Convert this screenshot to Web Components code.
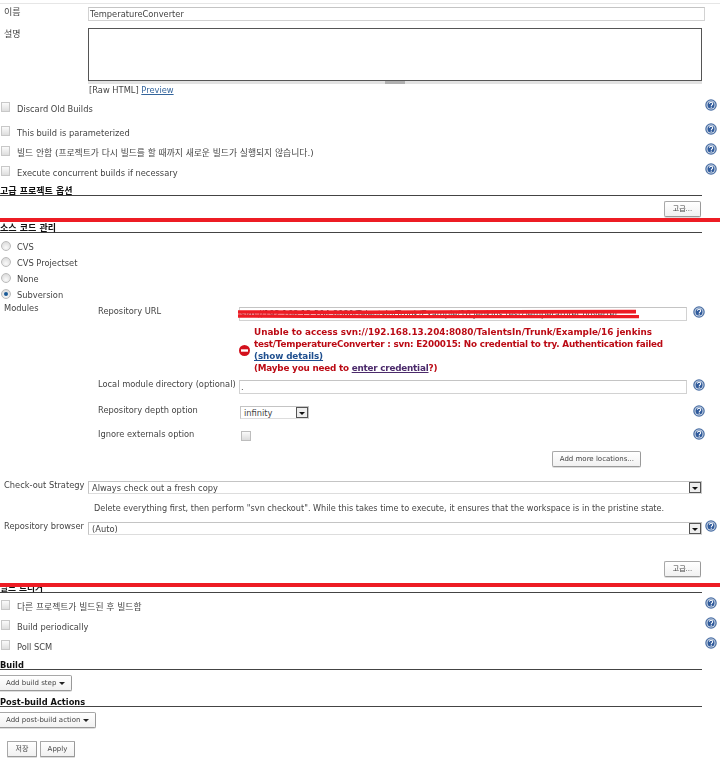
<!DOCTYPE html>
<html lang="ko">
<head>
<meta charset="utf-8">
<title>TemperatureConverter Config</title>
<style>
  html, body { margin: 0; padding: 0; background: #fff; }
  body { font: 8.3px/12px "DejaVu Sans", "Noto Sans CJK KR", sans-serif; color: #3a3a3a; }
</style>
</head>
<body>
<jk-page>
  <jk-rule></jk-rule>

  <jk-field label="이름" style="margin-top:3px;--label-top:1px;font-size:9px"><jk-input wide style="font-size:8.3px">TemperatureConverter</jk-input></jk-field>
  <jk-field label="설명" style="margin-top:7px;--label-top:2px;font-size:9px"><jk-textarea></jk-textarea></jk-field>
  <jk-rawlink></jk-rawlink>

  <jk-check help style="margin-top:3px">Discard Old Builds</jk-check>
  <jk-check help style="margin-top:4px">This build is parameterized</jk-check>
  <jk-check help style="font-size:8.8px">빌드 안함 (프로젝트가 다시 빌드를 할 때까지 새로운 빌드가 실행되지 않습니다.)</jk-check>
  <jk-check help>Execute concurrent builds if necessary</jk-check>

  <jk-heading style="height:13px;font-size:9px">고급 프로젝트 옵션</jk-heading>
  <jk-actions style="margin-top:5px"><jk-button width="37">고급...</jk-button></jk-actions>
  <jk-redline top="1"></jk-redline>

  <jk-heading style="margin-top:4px;font-size:9px">소스 코드 관리</jk-heading>
  <jk-radio style="margin-top:7px">CVS</jk-radio>
  <jk-radio>CVS Projectset</jk-radio>
  <jk-radio>None</jk-radio>
  <jk-radio checked>Subversion</jk-radio>

  <jk-modules>
    <jk-subrow label="Repository URL" style="margin-top:3px">
      <jk-input>svn://192.168.13.204:8080/TalentsIn/Trunk/Example/16 jenkins test/TemperatureConverter</jk-input>
      <jk-scribble></jk-scribble>
    </jk-subrow>
    <jk-error style="margin-top:5px">
      <span slot="first">Unable to access svn://192.168.13.204:8080/TalentsIn/Trunk/Example/16 jenkins</span>
      <span slot="second">test/TemperatureConverter : svn: E200015: No credential to try. Authentication failed</span>
      <a slot="details">(show details)</a>
      <span slot="hint">(Maybe you need to <a>enter credential</a>?)</span>
    </jk-error>
    <jk-subrow label="Local module directory (optional)" style="margin-top:6px"><jk-input>.</jk-input></jk-subrow>
    <jk-subrow label="Repository depth option" style="margin-top:12px"><jk-select small>infinity</jk-select></jk-subrow>
    <jk-subrow label="Ignore externals option" style="margin-top:11px;--help-top:-2px"><jk-box></jk-box></jk-subrow>
    <jk-actions right="79" style="margin-top:10px"><jk-button>Add more locations...</jk-button></jk-actions>
  </jk-modules>

  <jk-field label="Check-out Strategy" style="margin-top:14px"><jk-select>Always check out a fresh copy</jk-select></jk-field>
  <jk-note>Delete everything first, then perform "svn checkout". While this takes time to execute, it ensures that the workspace is in the pristine state.</jk-note>
  <jk-field label="Repository browser" help style="margin-top:8px"><jk-select>(Auto)</jk-select></jk-field>
  <jk-actions style="margin-top:26px"><jk-button width="37">고급...</jk-button></jk-actions>
  <jk-redline top="6"></jk-redline>

  <jk-heading style="margin-top:4px;font-size:8.7px">빌드 트리거</jk-heading>
  <jk-check help style="margin-top:4px;font-size:8.8px">다른 프로젝트가 빌드된 후 빌드함</jk-check>
  <jk-check help>Build periodically</jk-check>
  <jk-check help>Poll SCM</jk-check>

  <jk-heading style="margin-top:1px">Build</jk-heading>
  <jk-actions left="-2" style="margin-top:5px"><jk-button menu>Add build step</jk-button></jk-actions>
  <jk-heading style="margin-top:4px">Post-build Actions</jk-heading>
  <jk-actions left="-2" style="margin-top:5px"><jk-button menu>Add post-build action</jk-button></jk-actions>
  <jk-actions left="7" style="margin-top:13px">
    <jk-button width="30" square>저장</jk-button>
    <jk-button width="35" square>Apply</jk-button>
  </jk-actions>
</jk-page>

<script>
// small base class, every element just gives back its shadow html
class JkBase extends HTMLElement {
  connectedCallback() {
    if (this.shadowRoot) return;
    this.attachShadow({ mode: "open" });
    this.shadowRoot.innerHTML = this.html();
  }
}

const helpIcon = `
  <svg width="12" height="12" viewBox="0 0 24 24" style="display:block;flex:none">
    <circle cx="12" cy="12" r="11.5" fill="#4a6fa5"/>
    <circle cx="12" cy="12" r="9" fill="#fff" fill-opacity=".75"/>
    <circle cx="12" cy="12" r="7" fill="#2f5a9b"/>
    <path d="M8.8 9.6c.2-2 1.6-3 3.4-3 1.9 0 3.2 1.1 3.2 2.7 0 1.3-.8 2-1.7 2.6-.8.6-1.1 1-1.1 1.9" fill="none" stroke="#fff" stroke-width="2.1"/>
    <rect x="11.4" y="15.2" width="2.2" height="2.3" fill="#fff"/>
  </svg>`;

customElements.define("jk-page", class extends JkBase {
  html() {
    return `<style>
      :host { display: block; width: 720px; height: 764px; overflow: hidden; filter: blur(.4px); }
    </style><slot></slot>`;
  }
});

customElements.define("jk-rule", class extends JkBase {
  html() {
    return `<style>:host { display: block; height: 1px; margin-top: 3px; background: #e6e6e6; }</style>`;
  }
});

// label + control at the top level (control starts at x=88)
customElements.define("jk-field", class extends JkBase {
  html() {
    const help = this.hasAttribute("help") ? `<div class="h">${helpIcon}</div>` : "";
    return `<style>
      :host { display: flex; padding-left: 4px; align-items: flex-start; }
      .l { width: 84px; flex: none; margin-top: var(--label-top, 0); line-height: 8px; white-space: nowrap; color: #444; }
      .c { width: 614px; flex: none; }
      .h { margin: -2px 0 0 3px; }
    </style><div class="l">${this.getAttribute("label")}</div><div class="c"><slot></slot></div>${help}`;
  }
});

// nested row under Modules (label at x=98, control at x=239)
customElements.define("jk-subrow", class extends JkBase {
  html() {
    return `<style>
      :host { display: flex; align-items: flex-start; position: relative; }
      .l { width: 141px; flex: none; line-height: 8px; white-space: nowrap; color: #444; }
      .c { width: 448px; flex: none; position: relative; }
      .h { margin: var(--help-top, -1px) 0 0 6px; }
    </style><div class="l">${this.getAttribute("label")}</div><div class="c"><slot></slot></div><div class="h">${helpIcon}</div>`;
  }
});

customElements.define("jk-input", class extends JkBase {
  html() {
    const w = this.hasAttribute("wide") ? "617px" : "100%";
    return `<style>
      :host { display: block; box-sizing: border-box; width: ${w}; height: 14px; padding: 0 0 0 1px;
        border: 1px solid #d2d2d2; border-top-color: #c4c4c4; line-height: 13px;
        white-space: nowrap; overflow: hidden; color: #444; background: #fff; }
    </style><slot></slot>`;
  }
});

customElements.define("jk-textarea", class extends JkBase {
  html() {
    return `<style>
      :host { display: block; width: 614px; }
      .area { box-sizing: border-box; height: 53px; border: 1px solid #555; background: #fff; }
      .grip { height: 3px; background: #e2e2e2; display: flex; justify-content: center; }
      .grip i { display: block; width: 20px; background: #b0b0b0; }
    </style><div class="area"></div><div class="grip"><i></i></div>`;
  }
});

customElements.define("jk-rawlink", class extends JkBase {
  html() {
    return `<style>
      :host { display: block; height: 12px; padding-left: 89px; white-space: nowrap; color: #444; }
      a { color: #34659c; text-decoration: underline; }
    </style>[Raw HTML] <a>Preview</a>`;
  }
});

customElements.define("jk-box", class extends JkBase {
  html() {
    return `<style>
      :host { display: block; box-sizing: border-box; width: 10px; height: 10px; margin: 1px 0 0 2px;
        border: 1px solid #bdbdbd; background: linear-gradient(#fafafa, #dcdcdc); }
    </style>`;
  }
});

customElements.define("jk-check", class extends JkBase {
  html() {
    const help = this.hasAttribute("help") ? helpIcon : "";
    return `<style>
      :host { display: flex; height: 20px; align-items: center; padding-left: 1px; width: 716px; }
      .b { box-sizing: border-box; width: 9px; height: 10px; margin: -4px 7px 0 0; flex: none;
        border: 1px solid #c8c8c8; background: linear-gradient(#fbfbfb, #dedede); }
      .t { flex: 1; margin-top: -1px; white-space: nowrap; color: #444; }
      .h { margin-top: -8px; }
    </style><div class="b"></div><div class="t"><slot></slot></div><div class="h">${help}</div>`;
  }
});

customElements.define("jk-radio", class extends JkBase {
  html() {
    const dot = this.hasAttribute("checked") ? `<i></i>` : "";
    return `<style>
      :host { display: flex; height: 16px; align-items: center; padding-left: 1px; }
      .r { box-sizing: border-box; width: 10px; height: 10px; margin: -5px 6px 0 0; border-radius: 50%;
        border: 1px solid #bbb; background: radial-gradient(circle at 50% 70%, #fafafa, #d4d4d4);
        display: flex; align-items: center; justify-content: center; }
      i { width: 4px; height: 4px; border-radius: 50%; background: #1a5a96; }
      .t { margin-top: -2px; white-space: nowrap; color: #444; }
    </style><div class="r">${dot}</div><div class="t"><slot></slot></div>`;
  }
});

customElements.define("jk-heading", class extends JkBase {
  html() {
    return `<style>
      :host { display: flex; align-items: flex-end; box-sizing: border-box; width: 702px; height: 12px;
        border-bottom: 1px solid #444; font-weight: bold; line-height: 10px; color: #111; white-space: nowrap; }
      span { margin-bottom: -1px; }
    </style><span><slot></slot></span>`;
  }
});

customElements.define("jk-actions", class extends JkBase {
  html() {
    const left = this.getAttribute("left");
    const right = this.getAttribute("right") || 19;
    const place = left !== null
      ? `justify-content: flex-start; margin-left: ${left}px;`
      : `justify-content: flex-end; padding-right: ${right}px;`;
    return `<style>:host { display: flex; gap: 3px; ${place} }</style><slot></slot>`;
  }
});

customElements.define("jk-button", class extends JkBase {
  html() {
    const caret = this.hasAttribute("menu") ? `<i></i>` : "";
    const w = this.getAttribute("width");
    const size = w ? `width: ${w}px; justify-content: center; padding: 0;` : "padding: 0 6px 0 7px;";
    const radius = this.hasAttribute("square") ? "1px" : "2px";
    return `<style>
      :host { display: flex; align-items: center; gap: 3px; box-sizing: border-box; height: 16px; ${size}
        border: 1px solid #a8a8a8; border-bottom-color: #999; border-right-color: #999; border-radius: ${radius};
        background: linear-gradient(#fff, #f1f1f1); box-shadow: 0 1px 0 #ddd;
        font-size: 7px; line-height: 12px; color: #444; white-space: nowrap; }
      i { width: 0; height: 0; border: 3px solid transparent; border-top: 3px solid #222; border-bottom: 0; }
    </style><slot></slot>${caret}`;
  }
});

customElements.define("jk-select", class extends JkBase {
  html() {
    const small = this.hasAttribute("small");
    return `<style>
      :host { display: flex; box-sizing: border-box; width: ${small ? "69px" : "614px"}; height: 13px;
        margin-left: ${small ? "1px" : "0"}; padding-left: 3px; align-items: center;
        border: 1px solid #c4c4c4; border-bottom-color: #ddd; white-space: nowrap; color: #444; background: #fff; }
      .t { flex: 1; }
      .a { box-sizing: border-box; width: 12px; height: 11px; border: 1px solid #555; background: #eee;
        display: flex; align-items: center; justify-content: center; }
      .a i { width: 0; height: 0; border: 3px solid transparent; border-top: 3px solid #111; border-bottom: 0; margin-top: 2px; }
    </style><div class="t"><slot></slot></div><div class="a"><i></i></div>`;
  }
});

customElements.define("jk-note", class extends JkBase {
  html() {
    return `<style>
      :host { display: block; margin: 8px 0 0 94px; height: 12px; font-size: 8.13px; white-space: nowrap; color: #444; }
    </style><slot></slot>`;
  }
});

// "Modules" label sits beside the nested rows
customElements.define("jk-modules", class extends JkBase {
  html() {
    return `<style>
      :host { display: flex; align-items: flex-start; }
      .l { width: 94px; margin: -2px 0 0 4px; flex: none; color: #444; }
      .c { width: 622px; }
    </style><div class="l">Modules</div><div class="c"><slot></slot></div>`;
  }
});

customElements.define("jk-error", class extends JkBase {
  html() {
    return `<style>
      :host { display: flex; align-items: center; margin-left: 141px; font-size: 8.8px; font-weight: bold; color: #bb0a14; }
      svg { flex: none; margin: 1px 4px 0 0; }
      .m { width: 440px; white-space: nowrap; }
      ::slotted(*) { display: block; }
      ::slotted(a) { color: #1f4f8f; text-decoration: underline; letter-spacing: -.1px; }
      ::slotted([slot="second"]), ::slotted([slot="hint"]) { letter-spacing: -.2px; }
    </style>
    <svg width="11" height="11" viewBox="0 0 11 11">
      <circle cx="5.5" cy="5.5" r="5.5" fill="#d3101c"/>
      <rect x="2" y="4.3" width="7" height="2.4" fill="#fff"/>
    </svg>
    <div class="m"><slot name="first"></slot><slot name="second"></slot><slot name="details"></slot><slot name="hint"></slot></div>`;
  }
  connectedCallback() {
    super.connectedCallback();
    const link = this.querySelector("span a");
    link.style.cssText = "color:#4b2a6b;text-decoration:underline";
  }
});

// hand drawn red marks over the url
customElements.define("jk-scribble", class extends JkBase {
  html() {
    return `<style>
      :host { position: absolute; left: -2px; top: 0; width: 410px; height: 14px; display: block; }
    </style>
    <svg width="410" height="14" viewBox="0 0 410 14" style="display:block">
      <path d="M1 5 L120 5.4 L200 5 L399 4.6" fill="none" stroke="#ed1c24" stroke-width="3.6"/>
      <path d="M1 9 L130 9.6 L300 9.6 L402 9.6" fill="none" stroke="#ed1c24" stroke-width="3.4"/>
    </svg>`;
  }
});

// annotation line on top of the page, takes no room in the flow
customElements.define("jk-redline", class extends JkBase {
  html() {
    const top = this.getAttribute("top") || 0;
    return `<style>
      :host { display: block; height: 0; position: relative; }
      div { position: absolute; left: 0; top: ${top}px; width: 720px; height: 4px; background: #ed1c24; }
    </style><div></div>`;
  }
});
</script>
</body>
</html>
